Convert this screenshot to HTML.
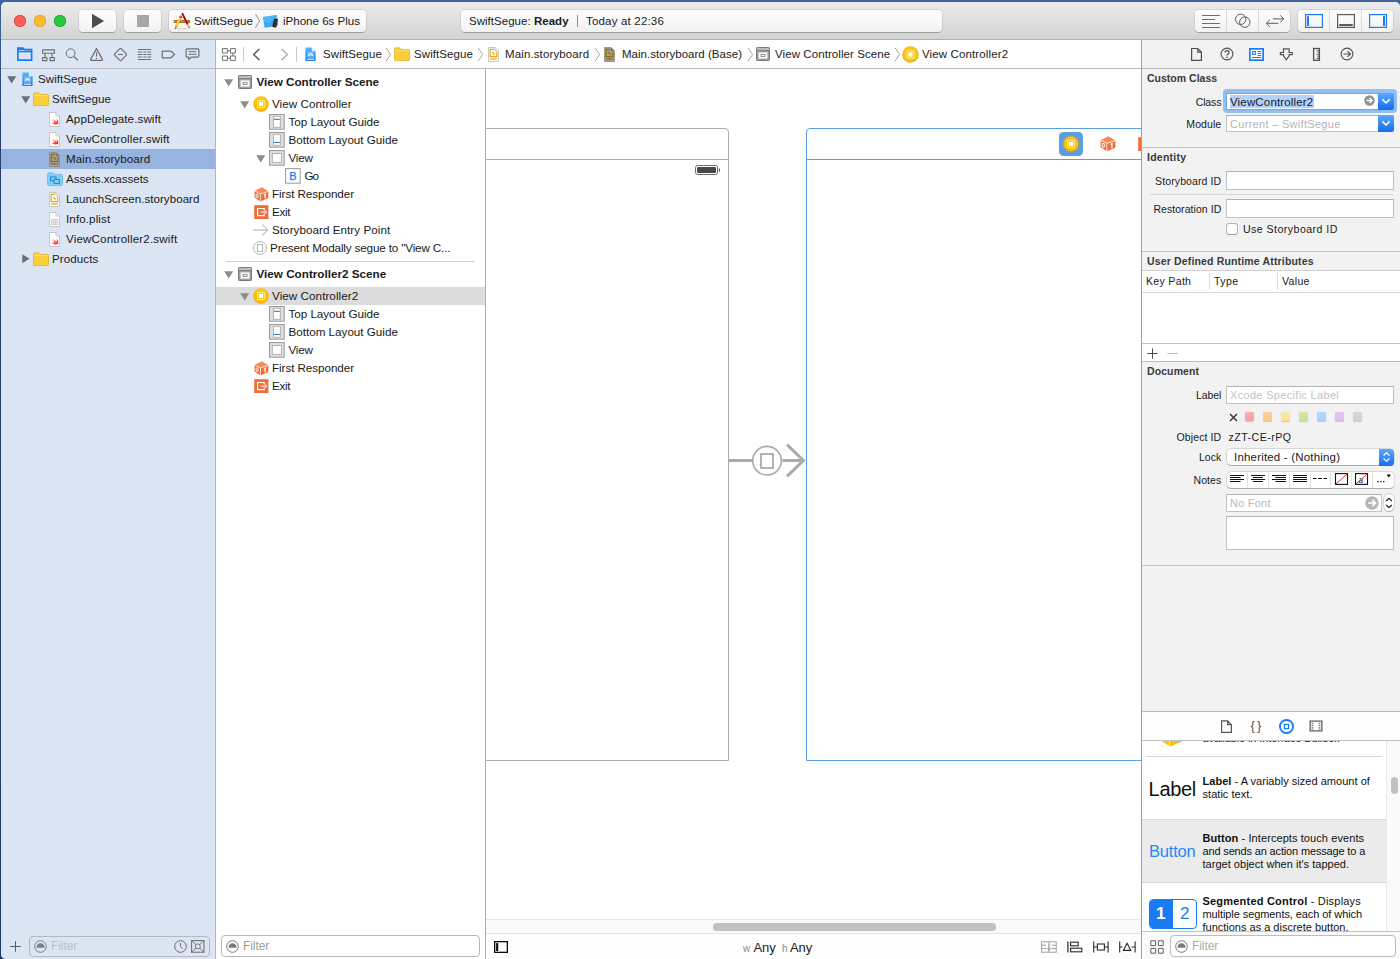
<!DOCTYPE html>
<html><head><meta charset="utf-8">
<style>
*{box-sizing:border-box;margin:0;padding:0}
html,body{width:1400px;height:959px;overflow:hidden;background:linear-gradient(#45699d 0,#3b5f93 3px,#3b5f93 30px,#24426f 120px,#203b66 959px);font-family:"Liberation Sans",sans-serif;font-size:12px;color:#1a1a1a}
#win{position:absolute;left:0;top:0;width:1400px;height:959px;overflow:hidden}
#win div,#win svg,#win span{position:absolute}
#wbg{left:1px;top:2px;width:1399px;height:957px;background:#fff;border-radius:5px 5px 0 5px}
#tb{left:1px;top:2px;width:1399px;height:38px;background:linear-gradient(#ececec,#d3d3d3);border-bottom:1px solid #b1b1b1;border-radius:5px 5px 0 0}
.tl{top:15px;width:12px;height:12px;border-radius:6px}
.btn{top:10px;height:22px;background:linear-gradient(#fefefe,#f2f2f2);border-radius:4px;box-shadow:0 0 0 .5px rgba(0,0,0,.15),0 1px 0 rgba(0,0,0,.2)}
.t{white-space:nowrap;line-height:14px}
.b{font-weight:bold}
#nav{left:1px;top:40px;width:214px;height:919px;background:#dbe5f4;border-radius:0 0 0 5px}
.hl{height:1px;background:#c6c6c6}
.vl{width:1px;background:#c6c6c6}
#insp{left:1142px;top:40px;width:258px;height:919px;background:#f2f2f2}

.tri{width:0;height:0;border-left:4.5px solid transparent;border-right:4.5px solid transparent;border-top:7px solid #6d6d6d}
.trir{width:0;height:0;border-top:4.5px solid transparent;border-bottom:4.5px solid transparent;border-left:7px solid #6d6d6d}

.fld{background:#fff;border:1px solid #c1c1c1;border-top-color:#b2b2b2}
.lab{white-space:nowrap;line-height:14px;font-size:10.5px;text-align:right;width:80px;left:1141.3px}
.sec{white-space:nowrap;line-height:14px;font-size:10.5px;font-weight:bold;left:1147px;color:#3a3a3a}
.s11{font-size:10.6px}
.o{font-size:11.7px}
.n{font-size:11.6px}
.j{font-size:11.5px}
.d{font-size:11px;line-height:14px;color:#111}
</style></head><body>
<div id="win">
<div id="wbg"></div>
<div id="tb"></div>
<div id="nav"></div><div class="vl" style="left:215px;top:40px;height:919px;background:#b5b5b5"></div>
<div id="insp"></div><div class="vl" style="left:1141px;top:40px;height:919px;background:#9f9f9f"></div>
<!--TOOLBAR-->
<div class="tl" style="left:14px;background:#fc5f57;box-shadow:inset 0 0 0 .6px #d8392f"></div>
<div class="tl" style="left:34px;background:#fdbc2e;box-shadow:inset 0 0 0 .6px #d8981a"></div>
<div class="tl" style="left:54px;background:#28c840;box-shadow:inset 0 0 0 .6px #179f27"></div>
<div class="btn" style="left:79px;width:37px"></div>
<svg style="left:91px;top:13px" width="14" height="16" viewBox="0 0 14 16"><path d="M1 .8 L13 8 L1 15.2Z" fill="#4d4d4d"/></svg>
<div class="btn" style="left:124px;width:37px"></div>
<div style="left:137px;top:15px;width:12px;height:12px;background:#a6a6a6"></div>
<div class="btn" style="left:169px;width:197px"></div>
<svg style="left:173px;top:12px" width="19" height="18" viewBox="0 0 19 18">
<ellipse cx="9" cy="16.6" rx="7" ry=".7" fill="#000" opacity=".12"/>
<rect x=".8" y="8" width="16.2" height="3" fill="#a97430"/><path d="M1.8 9.5H16" stroke="#cfa76a" stroke-width=".8" stroke-dasharray="1.2 .8"/>
<path d="M9.5 1.8 L14.8 12.6" stroke="#a30b0b" stroke-width="1.9" stroke-linecap="round"/>
<path d="M14.6 12.4 L15.5 14.2" stroke="#f3d4d4" stroke-width="2.2"/>
<path d="M14.6 14.5 L16.5 13.7 L16.9 16.9Z" fill="#b06c35"/>
<path d="M7.6 5.4 L3.4 14.2" stroke="#d9b90f" stroke-width="2.3"/>
<path d="M7.3 5.2 L3.1 14" stroke="#fbea2a" stroke-width="1.4"/>
<circle cx="7.7" cy="4.9" r="1.45" fill="#f1346a"/>
<path d="M2.2 13.6 L4.6 14.8 L2.2 16.8Z" fill="#c98b4e"/><circle cx="2.3" cy="16.5" r=".6" fill="#222"/>
</svg>
<span class="t" style="letter-spacing:0.034px;left:194px;top:14px;font-size:11.6px">SwiftSegue</span>
<svg style="left:255px;top:13px" width="6" height="16" viewBox="0 0 6 16"><path d="M.5 1.1 L4.6 7.9 L.5 14.7" stroke="#8e8e8e" stroke-width="1" fill="none"/></svg>
<svg style="left:262px;top:13px" width="18" height="16" viewBox="0 0 18 16">
<path d="M1 4.1 L14.9 2.1 L16 12.4 L2.7 14.9Z" fill="#3ba3f3"/><path d="M1 4.1 L14.9 2.1 L15.4 7 L1.6 9.4Z" fill="#58b6f8" opacity=".7"/>
<path d="M6 5.5L7.2 4.2M5.4 9.2H8M5.6 12L6.2 10.8" stroke="#9ad4fb" stroke-width=".6"/>
<path d="M12.2 5.6 L15.9 6.3 L14.1 14.7 L10.4 13.7Z" fill="#161616"/><path d="M13.1 6.8 L15 7.2 L13.6 13.4 L11.7 12.9Z" fill="#3a3a3a"/>
</svg>
<span class="t" style="letter-spacing:-0.025px;left:283px;top:14px;font-size:11.6px">iPhone 6s Plus</span>
<div class="btn" style="left:461px;width:481px"></div>
<span class="t" style="letter-spacing:0.029px;left:469px;top:14px;font-size:11.5px">SwiftSegue: <b>Ready</b></span>
<div class="vl" style="left:577px;top:15px;height:12px;background:#8b8b8b"></div>
<span class="t" style="letter-spacing:0.182px;left:586px;top:14px;font-size:11.5px">Today at 22:36</span>
<div class="btn" style="left:1195px;width:95px"></div>
<div class="vl" style="left:1226px;top:10px;height:22px;background:#dcdcdc"></div>
<div class="vl" style="left:1258px;top:10px;height:22px;background:#dcdcdc"></div>
<svg style="left:1201px;top:14px" width="20" height="15" viewBox="0 0 20 15"><path d="M1 1.5h18M1 5.5h13M1 9.5h18M1 13.5h18" stroke="#1a7bf5" stroke-width="1.2"/></svg>
<svg style="left:1233px;top:12px" width="20" height="18" viewBox="0 0 20 18"><circle cx="7.7" cy="7.3" r="5.2" fill="none" stroke="#5a5a5a" stroke-width="1"/><circle cx="11.8" cy="10.2" r="5.2" fill="none" stroke="#5a5a5a" stroke-width="1"/></svg>
<svg style="left:1264px;top:13px" width="22" height="16" viewBox="0 0 22 16"><path d="M8.8 5.9H19.6M16.2 2.4L19.8 5.9L16.2 9.4M14.3 10.3H2.4M5.8 6.8L2.2 10.3L5.8 13.8" stroke="#5a5a5a" stroke-width="1" fill="none"/></svg>
<div class="btn" style="left:1298px;width:95px"></div>
<div class="vl" style="left:1329px;top:10px;height:22px;background:#dcdcdc"></div>
<div class="vl" style="left:1361px;top:10px;height:22px;background:#dcdcdc"></div>
<svg style="left:1305px;top:14px" width="18" height="14" viewBox="0 0 18 14"><rect x=".6" y=".6" width="16.8" height="12.8" fill="none" stroke="#1a7bf5" stroke-width="1.2"/><rect x="2" y="2.1" width="2" height="9.8" rx=".4" fill="#1a7bf5"/></svg>
<svg style="left:1337px;top:14px" width="18" height="14" viewBox="0 0 18 14"><rect x=".6" y=".6" width="16.8" height="12.8" fill="none" stroke="#5a5a5a" stroke-width="1.2"/><rect x="2.1" y="10" width="13.8" height="2" rx=".4" fill="#5a5a5a"/></svg>
<svg style="left:1369px;top:14px" width="18" height="14" viewBox="0 0 18 14"><rect x=".6" y=".6" width="16.8" height="12.8" fill="none" stroke="#1a7bf5" stroke-width="1.2"/><rect x="14" y="2.1" width="2" height="9.8" rx=".4" fill="#1a7bf5"/></svg>
<!--NAVIGATOR-->
<svg width="0" height="0" style="left:0;top:0"><defs>
<linearGradient id="pg" x1="0" y1="0" x2="0" y2="1"><stop offset="0" stop-color="#5bb6fa"/><stop offset="1" stop-color="#1a7ef4"/></linearGradient>
<radialGradient id="vcg" cx=".5" cy=".45" r=".55"><stop offset="0" stop-color="#ffd40a"/><stop offset=".7" stop-color="#fcc40d"/><stop offset="1" stop-color="#eda60a"/></radialGradient>
<g id="fold"><path d="M.5 2.2 Q.5 .8 1.8 .8 H5.6 L7 2.4 H14.4 Q15.5 2.4 15.5 3.6 V12.6 Q15.5 13.6 14.4 13.6 H1.6 Q.5 13.6 .5 12.6Z" fill="#fccf3a" stroke="#e0ae14" stroke-width=".7"/><path d="M1 3.4H15" stroke="#fde07a" stroke-width=".8"/></g>
<g id="doc"><path d="M.5 .5 H7 L10.5 4 V14.5 H.5Z" fill="#fff" stroke="#b9b9b9" stroke-width=".8"/><path d="M7 .5 V4 H10.5" fill="#eee" stroke="#b9b9b9" stroke-width=".7"/></g>
<g id="swift"><use href="#doc"/><path d="M2.4 7.4 Q5 9.8 7 10.6 Q5 8.4 3.8 6.4 Q6.2 8.8 8 9.8 Q8.4 8.2 7.2 6 Q9.8 8.6 9 11 Q9.6 12 9.4 12.8 Q8.6 11.8 7.6 12.2 Q5.2 13.2 2.4 10.4 Q4.2 11.2 5.6 10.4 Q3.6 9 2.4 7.4Z" fill="#f0412a"/></g>
<g id="sbY"><path d="M.5 .5 H7 L10.5 4 V14.5 H.5Z" fill="#fff" stroke="#b9b9b9" stroke-width=".8"/><path d="M7 .5 V4 H10.5" fill="#eee" stroke="#b9b9b9" stroke-width=".7"/><path d="M6.2 2.3 H2.2 V9.6 H8.8 V5" fill="none" stroke="#e3a61a" stroke-width="1.2"/><path d="M2.2 12H8.8" stroke="#e3a61a" stroke-width="1.3"/><path d="M3.8 4.4 Q6.6 5 7 8.2 Q4.6 7.6 3.8 4.4Z" fill="#e3a61a"/></g>
<g id="sbB"><path d="M.5 .5 H7 L10.5 4 V14.5 H.5Z" fill="#a39e94" stroke="#8e897f" stroke-width=".8"/><path d="M7 .5 V4 H10.5Z" fill="#77736b"/><path d="M6.2 2.3 H2.2 V9.6 H8.8 V5" fill="none" stroke="#946c14" stroke-width="1.2"/><path d="M2.2 12H8.8" stroke="#946c14" stroke-width="1.3"/><path d="M3.8 4.4 Q6.6 5 7 8.2 Q4.6 7.6 3.8 4.4Z" fill="#946c14"/></g>
<g id="proj"><path d="M.4 .4 H6.8 L10.6 4.2 V14 H.4Z" fill="url(#pg)"/><path d="M6.8 .4 V4.2 H10.6Z" fill="#eaf4ff"/><rect x="2" y="4.6" width="7" height="6.2" fill="#fff" opacity=".28"/><path d="M3.6 9 Q3.8 6.4 5.5 6.4 Q7.2 6.4 7.4 9 M4.4 8.2 L5.5 7.4 L6.6 8.2" stroke="#fff" fill="none" stroke-width="1"/><path d="M2 12.2H9" stroke="#fff" stroke-width="1"/></g>
<g id="plist"><use href="#doc"/><path d="M2.4 7.5 H8.6 V12.5 H2.4Z M2.4 10 H8.6 M4.5 7.5 V12.5 M6.6 7.5V12.5" fill="#f4f4f4" stroke="#bdbdbd" stroke-width=".7"/></g>
<g id="xca"><path d="M.5 2.2 Q.5 .8 1.8 .8 H5.6 L7 2.4 H14.4 Q15.5 2.4 15.5 3.6 V12.6 Q15.5 13.6 14.4 13.6 H1.6 Q.5 13.6 .5 12.6Z" fill="#7fd0f5" stroke="#4db0e4" stroke-width=".6"/><rect x="3.5" y="5" width="5.5" height="4" fill="none" stroke="#1b7fd6" stroke-width=".9"/><rect x="7" y="7.4" width="5.5" height="4" fill="#7fd0f5" stroke="#1b7fd6" stroke-width=".9"/></g>
<g id="scene"><rect x=".5" y=".5" width="13" height="13" rx=".8" fill="#9f9f9f" stroke="#787878" stroke-width="1"/><path d="M1.2 2.6 L2.6 1.4 L4 2.6 L5.4 1.4 L6.8 2.6 L8.2 1.4 L9.6 2.6 L11 1.4 L12.6 2.6" fill="none" stroke="#e8e8e8" stroke-width=".9"/><path d="M.5 3.6H13.5" stroke="#787878" stroke-width=".8"/><rect x="2.2" y="5" width="9.6" height="7" fill="#cfcfcf"/><rect x="3" y="5.9" width="8" height="5.2" fill="#fff"/><rect x="5" y="7.5" width="4" height="2" fill="none" stroke="#8a8a8a" stroke-width=".9"/></g>
<g id="vc"><circle cx="8" cy="8" r="7.8" fill="url(#vcg)"/><rect x="4.5" y="4.5" width="7" height="7" fill="none" stroke="#ffe47a" stroke-width="1"/><rect x="6" y="6" width="4" height="4" fill="#fff"/></g>
<g id="lgT"><rect x=".5" y=".5" width="14.7" height="14.7" fill="#dedede" stroke="#9a9a9a" stroke-width="1"/><rect x="4.4" y="2.3" width="6.9" height="11" fill="#fff" stroke="#a6a6a6" stroke-width=".8"/><path d="M4.8 5.3H10.9" stroke="#2a6fc4" stroke-width="1"/></g>
<g id="lgB"><rect x=".5" y=".5" width="14.7" height="14.7" fill="#dedede" stroke="#9a9a9a" stroke-width="1"/><rect x="4.4" y="2.3" width="6.9" height="11" fill="#fff" stroke="#a6a6a6" stroke-width=".8"/><path d="M4.8 10.4H10.9" stroke="#2a6fc4" stroke-width="1"/></g>
<g id="vw"><rect x=".5" y=".5" width="14.7" height="14.7" fill="#dedede" stroke="#9a9a9a" stroke-width="1"/><rect x="3.3" y="3.5" width="9.1" height="8.8" fill="#fff" stroke="#a6a6a6" stroke-width=".8"/></g>
<g id="bt"><rect x=".6" y=".6" width="14.6" height="14.6" fill="#fff" stroke="#9a9a9a" stroke-width="1"/><text x="4.2" y="12" font-family="Liberation Sans,sans-serif" font-size="11" fill="#1a7bf5" stroke="#1a7bf5" stroke-width=".25">B</text></g>
<g id="fr"><path d="M7.9 .5 L14.4 4.4 V11 L6.4 14.4 L.6 10.6 V3.9Z" fill="#f26b38"/><path d="M7.9 .5 L14.4 4.4 L6.4 6.9 L.6 3.9Z" fill="#f58a5a"/><path d="M.6 3.9 L6.4 6.9 L14.4 4.4 M6.4 6.9V14.4" stroke="#fff" stroke-width=".8" fill="none"/><ellipse cx="3.1" cy="8.7" rx="1.05" ry="1.9" fill="none" stroke="#fff" stroke-width=".9" transform="rotate(-8 3.1 8.7)"/><path d="M9.9 8.2 L11.2 7.2 V11.4" stroke="#fff" stroke-width="1.2" fill="none"/></g>
<g id="ex"><rect x=".2" y=".2" width="14.2" height="13.8" fill="#f26b38"/><path d="M10.2 5.4 V3.5 H3.6 V10.6 H10.2 V8.8" fill="none" stroke="#fff" stroke-width="1.2"/><path d="M6.6 7.1 H12.6 M10.8 5.5 L12.7 7.1 L10.8 8.7" fill="none" stroke="#fff" stroke-width="1"/></g>
<g id="sg"><circle cx="7" cy="7" r="6.4" fill="#fff" stroke="#a9a9a9" stroke-width=".9"/><rect x="4.4" y="3.6" width="5.2" height="6.8" fill="none" stroke="#a9a9a9" stroke-width=".9"/></g>
</defs></svg>
<div class="hl" style="left:1px;top:68px;width:214px;background:#b9bcc2"></div>
<div style="left:1px;top:149px;width:214px;height:20px;background:#97b3df"></div>
<span class="t n" style="letter-spacing:0.034px;left:38px;top:72.1px">SwiftSegue</span>
<span class="t n" style="letter-spacing:0.034px;left:52px;top:92.1px">SwiftSegue</span>
<span class="t n" style="letter-spacing:0.103px;left:66px;top:112.1px">AppDelegate.swift</span>
<span class="t n" style="letter-spacing:0.137px;left:66px;top:132.1px">ViewController.swift</span>
<span class="t n" style="letter-spacing:0.077px;left:66px;top:152.1px">Main.storyboard</span>
<span class="t n" style="letter-spacing:-0.035px;left:66px;top:172.1px">Assets.xcassets</span>
<span class="t n" style="letter-spacing:0.031px;left:66px;top:192.1px">LaunchScreen.storyboard</span>
<span class="t n" style="letter-spacing:0.111px;left:66px;top:212.1px">Info.plist</span>
<span class="t n" style="letter-spacing:0.155px;left:66px;top:232.1px">ViewController2.swift</span>
<span class="t n" style="letter-spacing:0.067px;left:52px;top:252.1px">Products</span>
<svg style="left:6.8px;top:75.7px" width="10" height="8" viewBox="0 0 10 8"><path d="M.2 .3 H9.2 L4.7 7.6Z" fill="#6b7077"/></svg><svg style="left:20.8px;top:95.7px" width="10" height="8" viewBox="0 0 10 8"><path d="M.2 .3 H9.2 L4.7 7.6Z" fill="#6b7077"/></svg><svg style="left:22px;top:254.3px" width="8" height="10" viewBox="0 0 8 10"><path d="M.3 .2 V9.2 L7.6 4.7Z" fill="#6b7077"/></svg>
<svg style="left:21.5px;top:72px" width="12" height="15"><use href="#proj"/></svg>
<svg style="left:33px;top:92px" width="16" height="15"><use href="#fold"/></svg>
<svg style="left:49.2px;top:111.5px" width="12" height="16"><use href="#swift"/></svg>
<svg style="left:49.2px;top:131.5px" width="12" height="16"><use href="#swift"/></svg>
<svg style="left:49.2px;top:151.5px" width="12" height="16"><use href="#sbB"/></svg>
<svg style="left:47px;top:171.5px" width="16" height="15"><use href="#xca"/></svg>
<svg style="left:49.2px;top:191.5px" width="12" height="16"><use href="#sbY"/></svg>
<svg style="left:49.2px;top:211.5px" width="12" height="16"><use href="#plist"/></svg>
<svg style="left:49.2px;top:231.5px" width="12" height="16"><use href="#swift"/></svg>
<svg style="left:33px;top:252px" width="16" height="15"><use href="#fold"/></svg>
<!--JUMPBAR-->
<svg style="left:17px;top:47px" width="16" height="15" viewBox="0 0 16 15"><path d="M.9 1.2 H6 L7.2 2.6 H14.6 V13.1 H.9Z" fill="none" stroke="#1a7bf5" stroke-width="1.7"/><path d="M.9 4.6H14.6" stroke="#1a7bf5" stroke-width="1.5"/><path d="M.1 1.4 H5.8 L7.2 3 H.1Z" fill="#1a7bf5"/></svg>
<svg style="left:41px;top:48px" width="15" height="14" viewBox="0 0 15 14"><path d="M1.6 1.9 H13.4 V5.3 H1.6Z M4 5.3 V9.6 M11 5.3 V9.6 M1.6 9.6 H5.9 V12.6 H1.6Z M9.1 9.6 H13.4 V12.6 H9.1Z" fill="none" stroke="#6f6f6f" stroke-width="1.1"/></svg>
<svg style="left:65px;top:48px" width="14" height="13" viewBox="0 0 14 13"><circle cx="5.6" cy="5.2" r="4.4" fill="none" stroke="#6f6f6f" stroke-width="1"/><path d="M8.8 8.4 L13 12.2" stroke="#6f6f6f" stroke-width="1.3"/></svg>
<svg style="left:89px;top:47px" width="15" height="15" viewBox="0 0 15 15"><path d="M7.5 1.6 L13.4 12.4 Q13.6 13.3 12.6 13.4 H2.4 Q1.4 13.3 1.6 12.4Z" fill="none" stroke="#6f6f6f" stroke-width="1.2" stroke-linejoin="round"/><path d="M7.5 5.2V9.6M7.5 10.8V12" stroke="#6f6f6f" stroke-width="1.1"/></svg>
<svg style="left:113px;top:47px" width="15" height="15" viewBox="0 0 15 15"><path d="M6.6 1.9 Q7.5 1 8.4 1.9 L13.1 6.6 Q14 7.5 13.1 8.4 L8.4 13.1 Q7.5 14 6.6 13.1 L1.9 8.4 Q1 7.5 1.9 6.6Z" fill="none" stroke="#6f6f6f" stroke-width="1.2" stroke-linejoin="round"/><path d="M5 7.5H10" stroke="#6f6f6f" stroke-width="1.1"/></svg>
<svg style="left:137px;top:48px" width="15" height="13" viewBox="0 0 15 13"><path d="M.8 1.5H14.2M.8 11.5H14.2" stroke="#6f6f6f" stroke-width="1"/><path d="M.8 4H5.4M6.4 4H9.4M10.4 4H14.2M.8 6.5H5.4M6.4 6.5H9.4M10.4 6.5H14.2M.8 9H5.4M6.4 9H9.4M10.4 9H14.2" stroke="#6f6f6f" stroke-width="1"/></svg>
<svg style="left:161px;top:50px" width="15" height="9" viewBox="0 0 15 9"><path d="M1.2 1.2 H10 L13.6 4.5 L10 7.8 H1.2Z" fill="none" stroke="#6f6f6f" stroke-width="1.2" stroke-linejoin="round"/></svg>
<svg style="left:185px;top:48px" width="15" height="13" viewBox="0 0 15 13"><path d="M2.2 .9 H12.8 Q13.9 .9 13.9 2 V8 Q13.9 9.1 12.8 9.1 H6.4 L3.8 11.6 V9.1 H2.2 Q1.1 9.1 1.1 8 V2 Q1.1 .9 2.2 .9Z" fill="none" stroke="#6f6f6f" stroke-width="1.2" stroke-linejoin="round"/><path d="M3.6 3.7H11.4M3.6 6.3H11.4" stroke="#6f6f6f" stroke-width="1"/></svg>
<div class="hl" style="left:216px;top:68px;width:926px;background:#b9b9b9"></div>
<svg style="left:221px;top:47px" width="16" height="15" viewBox="0 0 16 15"><path d="M1.4 1.6 H6.4 V6 H1.4Z M9.4 1.6 H14.4 V6 H9.4Z M1.4 9 H6.4 V13.4 H1.4Z M9.4 9 H14.4 V13.4 H9.4Z M6.4 3.8 H9.4 M11.9 6 V9 M6.4 11.2 H9.4" fill="none" stroke="#6f6f6f" stroke-width="1"/></svg>
<div class="vl" style="left:243px;top:47px;height:15px;background:#c9c9c9"></div>
<svg style="left:252px;top:48px" width="9" height="13" viewBox="0 0 9 13"><path d="M7.4 1 L1.6 6.5 L7.4 12" fill="none" stroke="#4a4a4a" stroke-width="1.3"/></svg>
<svg style="left:280px;top:48px" width="9" height="13" viewBox="0 0 9 13"><path d="M1.6 1 L7.4 6.5 L1.6 12" fill="none" stroke="#a8a8a8" stroke-width="1.3"/></svg>
<div class="vl" style="left:296px;top:47px;height:15px;background:#c9c9c9"></div>
<svg style="left:305px;top:46.5px" width="12" height="15"><use href="#proj"/></svg>
<span class="t j" style="letter-spacing:0.081px;left:323px;top:47px">SwiftSegue</span>
<svg class="sep" style="left:385px;top:47px" width="7" height="15" viewBox="0 0 7 15"><path d="M1 .8 L5.6 7.5 L1 14.2" fill="none" stroke="#a3a3a3" stroke-width="1"/></svg>
<svg style="left:394px;top:47px" width="16" height="15"><use href="#fold"/></svg>
<span class="t j" style="letter-spacing:0.081px;left:414px;top:47px">SwiftSegue</span>
<svg class="sep" style="left:477px;top:47px" width="7" height="15" viewBox="0 0 7 15"><path d="M1 .8 L5.6 7.5 L1 14.2" fill="none" stroke="#a3a3a3" stroke-width="1"/></svg>
<svg style="left:487.5px;top:46.5px" width="12" height="16"><use href="#sbY"/></svg>
<span class="t j" style="letter-spacing:0.122px;left:505px;top:47px">Main.storyboard</span>
<svg class="sep" style="left:594px;top:47px" width="7" height="15" viewBox="0 0 7 15"><path d="M1 .8 L5.6 7.5 L1 14.2" fill="none" stroke="#a3a3a3" stroke-width="1"/></svg>
<svg style="left:604px;top:46.5px" width="12" height="16"><use href="#sbB"/></svg>
<span class="t j" style="letter-spacing:0.021px;left:622px;top:47px">Main.storyboard (Base)</span>
<svg class="sep" style="left:746.5px;top:47px" width="7" height="15" viewBox="0 0 7 15"><path d="M1 .8 L5.6 7.5 L1 14.2" fill="none" stroke="#a3a3a3" stroke-width="1"/></svg>
<svg style="left:756px;top:47px" width="14" height="14"><use href="#scene"/></svg>
<span class="t j" style="letter-spacing:0.077px;left:775px;top:47px">View Controller Scene</span>
<svg class="sep" style="left:894px;top:47px" width="7" height="15" viewBox="0 0 7 15"><path d="M1 .8 L5.6 7.5 L1 14.2" fill="none" stroke="#a3a3a3" stroke-width="1"/></svg>
<svg style="left:902px;top:46px" width="17" height="17" viewBox="0 0 16 16"><use href="#vc"/></svg>
<span class="t j" style="letter-spacing:0.127px;left:922px;top:47px">View Controller2</span>
<!--OUTLINE-->
<div class="vl" style="left:485px;top:69px;height:890px;background:#adadad"></div>
<div style="left:216px;top:287px;width:269px;height:18px;background:#dcdcdc"></div>
<div class="hl" style="left:226px;top:261px;width:249px;background:#d0d0d0"></div>
<svg style="left:223.8px;top:78.7px" width="10" height="8" viewBox="0 0 10 8"><path d="M.2 .3 H9.2 L4.7 7.6Z" fill="#8c8c8c"/></svg><svg style="left:238px;top:75px" width="14" height="14"><use href="#scene"/></svg>
<span class="t b o" style="letter-spacing:-0.029px;left:256.5px;top:75px">View Controller Scene</span>
<svg style="left:239.8px;top:100.7px" width="10" height="8" viewBox="0 0 10 8"><path d="M.2 .3 H9.2 L4.7 7.6Z" fill="#8c8c8c"/></svg><svg style="left:253px;top:96px" width="16" height="16"><use href="#vc"/></svg>
<span class="t o" style="letter-spacing:0.037px;left:272px;top:97px">View Controller</span>
<svg style="left:269px;top:114px" width="16" height="16"><use href="#lgT"/></svg>
<span class="t o" style="letter-spacing:-0.045px;left:288.5px;top:115px">Top Layout Guide</span>
<svg style="left:269px;top:132px" width="16" height="16"><use href="#lgB"/></svg>
<span class="t o" style="letter-spacing:-0.022px;left:288.5px;top:133px">Bottom Layout Guide</span>
<svg style="left:255.8px;top:154.7px" width="10" height="8" viewBox="0 0 10 8"><path d="M.2 .3 H9.2 L4.7 7.6Z" fill="#8c8c8c"/></svg><svg style="left:269px;top:150px" width="16" height="16"><use href="#vw"/></svg>
<span class="t o" style="letter-spacing:-0.231px;left:288.5px;top:151px">View</span>
<svg style="left:285px;top:168px" width="16" height="16"><use href="#bt"/></svg>
<span class="t o" style="letter-spacing:-0.997px;left:304.5px;top:169px">Go</span>
<svg style="left:254px;top:186.9px" width="15" height="15"><use href="#fr"/></svg>
<span class="t o" style="letter-spacing:-0.077px;left:272px;top:187px">First Responder</span>
<svg style="left:253.8px;top:204.9px" width="15" height="15"><use href="#ex"/></svg>
<span class="t o" style="letter-spacing:-0.321px;left:272px;top:205px">Exit</span>
<svg style="left:253px;top:223px" width="16" height="14" viewBox="0 0 16 14"><path d="M.5 7H14.6M9 1.4L14.8 7L9 12.6" fill="none" stroke="#a9a9a9" stroke-width="1"/></svg>
<span class="t o" style="letter-spacing:0.028px;left:272px;top:223px">Storyboard Entry Point</span>
<svg style="left:253px;top:241px" width="14" height="14"><use href="#sg"/></svg>
<span class="t o" style="letter-spacing:-0.156px;left:270px;top:241px">Present Modally segue to "View C...</span>
<svg style="left:223.8px;top:270.7px" width="10" height="8" viewBox="0 0 10 8"><path d="M.2 .3 H9.2 L4.7 7.6Z" fill="#8c8c8c"/></svg><svg style="left:238px;top:267px" width="14" height="14"><use href="#scene"/></svg>
<span class="t b o" style="letter-spacing:-0.000px;left:256.5px;top:267px">View Controller2 Scene</span>
<svg style="left:239.8px;top:292.7px" width="10" height="8" viewBox="0 0 10 8"><path d="M.2 .3 H9.2 L4.7 7.6Z" fill="#8c8c8c"/></svg><svg style="left:253px;top:288px" width="16" height="16"><use href="#vc"/></svg>
<span class="t o" style="letter-spacing:0.041px;left:272px;top:289px">View Controller2</span>
<svg style="left:269px;top:306px" width="16" height="16"><use href="#lgT"/></svg>
<span class="t o" style="letter-spacing:-0.045px;left:288.5px;top:307px">Top Layout Guide</span>
<svg style="left:269px;top:324px" width="16" height="16"><use href="#lgB"/></svg>
<span class="t o" style="letter-spacing:-0.022px;left:288.5px;top:325px">Bottom Layout Guide</span>
<svg style="left:269px;top:342px" width="16" height="16"><use href="#vw"/></svg>
<span class="t o" style="letter-spacing:-0.231px;left:288.5px;top:343px">View</span>
<svg style="left:254px;top:360.9px" width="15" height="15"><use href="#fr"/></svg>
<span class="t o" style="letter-spacing:-0.077px;left:272px;top:361px">First Responder</span>
<svg style="left:253.8px;top:378.9px" width="15" height="15"><use href="#ex"/></svg>
<span class="t o" style="letter-spacing:-0.321px;left:272px;top:379px">Exit</span>
<!--CANVAS-->
<div style="left:486px;top:69px;width:655px;height:864px;overflow:hidden">
 <div style="left:-200px;top:59px;width:443px;height:633px;border:1px solid #ababab;border-radius:4px 4px 0 0"></div>
 <div class="hl" style="left:0;top:90px;width:242px;background:#ababab"></div>
 <svg style="left:208px;top:95px" width="28" height="12" viewBox="0 0 28 12"><rect x="1.5" y="1.5" width="22" height="9" rx="2" fill="#fff" stroke="#6a6a6a" stroke-width="1"/><rect x="3" y="3" width="19" height="6" rx="1" fill="#4a4a4a"/><path d="M24.9 3.9 Q26.1 4.2 26.1 6 Q26.1 7.8 24.9 8.1Z" fill="#5a5a5a"/></svg>
 <div style="left:320px;top:59px;width:600px;height:633px;border:1px solid #5a9ee2;border-radius:4px 4px 0 0"></div>
 <div class="hl" style="left:320px;top:90px;width:400px;background:#5a9ee2"></div>
 <div style="left:573px;top:63px;width:24px;height:24px;border-radius:4.5px;background:#5d9fde"></div>
 <svg style="left:577px;top:67px" width="16" height="16"><use href="#vc"/></svg>
 <svg style="left:614.3px;top:66.8px" width="16" height="16" viewBox="0 0 15 15"><use href="#fr"/></svg>
 <svg style="left:652px;top:68px" width="15" height="15"><use href="#ex"/></svg>
 <svg style="left:242px;top:370px" width="80" height="44" viewBox="0 0 80 44"><path d="M1 21.5H24.5M54.5 21.5H75" stroke="#ababab" stroke-width="3" fill="none"/><circle cx="39" cy="21.7" r="14.3" fill="#fff" stroke="#ababab" stroke-width="1.6"/><rect x="33" y="15" width="12" height="14" fill="none" stroke="#ababab" stroke-width="1.8"/><path d="M59 5.6 L75.4 21.5 L59 37.4" fill="none" stroke="#ababab" stroke-width="3"/></svg>
 <div class="hl" style="left:0;top:850px;width:655px;background:#e8e8e8"></div>
 <div style="left:0;top:851px;width:655px;height:13px;background:#fafafa"></div>
 <div style="left:227px;top:854.3px;width:283px;height:7.4px;border-radius:3.7px;background:#c1c1c1"></div>
</div>
<!--INSPECTOR-->
<div class="hl" style="left:1142px;top:68px;width:258px;background:#b9b9b9"></div>
<svg style="left:1190px;top:47px" width="13" height="15" viewBox="0 0 13 15"><path d="M1.6 1.5 H7.8 L11.4 5.1 V13.3 H1.6Z M7.8 1.5 V5.1 H11.4" fill="none" stroke="#505050" stroke-width="1.2"/></svg>
<svg style="left:1219.5px;top:47.4px" width="14" height="14" viewBox="0 0 14 14"><circle cx="7" cy="7" r="5.9" fill="none" stroke="#505050" stroke-width="1.1"/><path d="M5 5.6 Q5 3.6 7 3.6 Q9 3.6 9 5.4 Q9 6.5 7.8 7.1 Q7 7.6 7 8.6" fill="none" stroke="#505050" stroke-width="1.2"/><rect x="6.35" y="9.6" width="1.3" height="1.4" fill="#505050"/></svg>
<svg style="left:1249px;top:48px" width="15" height="13" viewBox="0 0 15 13"><rect width="15" height="13" fill="#1a7bf5"/><rect x="1.7" y="1.7" width="11.6" height="9.6" fill="#fff"/><rect x="3" y="3" width="4" height="4" fill="#1a7bf5"/><rect x="3.9" y="3.9" width="2.2" height="2.2" fill="#cfe2fd"/><path d="M8.6 3.5H12.2M8.6 5.5H12.2M8.6 7.5H12.2M2.9 9.5H12.2" stroke="#1a7bf5" stroke-width="1"/></svg>
<svg style="left:1279px;top:47px" width="15" height="15" viewBox="0 0 15 15"><path d="M4.5 1.8 H10.1 V5.5 H13.2 V7.6 H10.1 V8.8 L7.3 12.8 L4.5 8.8 V7.6 H1.4 V5.5 H4.5Z" fill="none" stroke="#505050" stroke-width="1.2" stroke-linejoin="miter"/></svg>
<svg style="left:1312px;top:47px" width="9" height="15" viewBox="0 0 9 15"><rect x="1.6" y="1.5" width="5.8" height="11.8" fill="none" stroke="#505050" stroke-width="1.3"/><path d="M4.6 3.8H7.2M5.4 5.8H7.2M4.6 7.8H7.2M5.4 9.8H7.2M4.6 11.4H7.2" stroke="#505050" stroke-width=".9"/></svg>
<svg style="left:1339.5px;top:47.4px" width="14" height="14" viewBox="0 0 14 14"><circle cx="7" cy="7" r="5.9" fill="none" stroke="#505050" stroke-width="1.1"/><path d="M3.4 7H10.4M7.6 4.2L10.4 7L7.6 9.8" fill="none" stroke="#505050" stroke-width="1.2"/></svg>

<span class="sec" style="letter-spacing:0.006px;top:71px">Custom Class</span>
<span class="t lab" style="letter-spacing:-0.133px;top:95px">Class</span>
<div style="left:1223px;top:89px;width:174px;height:23.5px;border-radius:4px;background:#92bff4"></div>
<div class="fld" style="left:1226px;top:93px;width:168px;height:17px;border-color:#6fa5ea"></div>
<div style="left:1229.8px;top:95px;width:84.6px;height:13px;background:#b2d2fb"></div>
<span class="t" style="letter-spacing:0.162px;left:1230px;top:94.5px;font-size:11.5px">ViewController2</span>
<svg style="left:1363.5px;top:95px" width="11" height="11" viewBox="0 0 11 11"><circle cx="5.5" cy="5.5" r="5.2" fill="#8f8f8f"/><path d="M2.4 5.5H8M5.6 3L8.2 5.5L5.6 8" fill="none" stroke="#fff" stroke-width="1.4"/></svg>
<div style="left:1378px;top:93px;width:16px;height:17px;border-radius:0 3px 3px 0;background:linear-gradient(#5aa9fb,#166cf2)"></div>
<svg style="left:1381px;top:98px" width="10" height="7" viewBox="0 0 10 7"><path d="M1.4 1.4L5 5L8.6 1.4" fill="none" stroke="#fff" stroke-width="1.5"/></svg>
<span class="t lab" style="letter-spacing:0.091px;top:117px">Module</span>
<div class="fld" style="left:1226px;top:115px;width:168px;height:17px"></div>
<span class="t" style="letter-spacing:0.302px;left:1230px;top:116.5px;font-size:11px;color:#b4b4b4">Current – SwiftSegue</span>
<div style="left:1378px;top:115px;width:16px;height:17px;border-radius:0 3px 3px 0;background:linear-gradient(#5aa9fb,#166cf2)"></div>
<svg style="left:1381px;top:120px" width="10" height="7" viewBox="0 0 10 7"><path d="M1.4 1.4L5 5L8.6 1.4" fill="none" stroke="#fff" stroke-width="1.5"/></svg>
<div class="hl" style="left:1142px;top:147px;width:258px;background:#c3c3c3"></div>

<span class="sec" style="letter-spacing:0.257px;top:150px">Identity</span>
<span class="t lab" style="letter-spacing:0.109px;top:174px">Storyboard ID</span>
<div class="fld" style="left:1226px;top:171px;width:168px;height:19px"></div>
<div class="hl" style="left:1150px;top:194px;width:243px;background:#d6d6d6"></div>
<span class="t lab" style="letter-spacing:0.055px;top:202px">Restoration ID</span>
<div class="fld" style="left:1226px;top:199px;width:168px;height:19px"></div>
<div style="left:1226px;top:223px;width:12px;height:12px;border:1px solid #b4b4b4;border-bottom-color:#a2a2a2;border-radius:3px;background:#fff"></div>
<span class="t s11" style="letter-spacing:0.451px;left:1243px;top:222px">Use Storyboard ID</span>
<div class="hl" style="left:1142px;top:251px;width:258px;background:#c3c3c3"></div>

<span class="sec" style="letter-spacing:0.158px;top:254px">User Defined Runtime Attributes</span>
<div style="left:1142px;top:270px;width:258px;height:92px;background:#fff;border-top:1px solid #cfcfcf;border-bottom:1px solid #bdbdbd"></div>
<span class="t s11" style="letter-spacing:0.287px;left:1146px;top:274px">Key Path</span>
<span class="t s11" style="letter-spacing:0.383px;left:1214px;top:274px">Type</span>
<span class="t s11" style="letter-spacing:0.298px;left:1282px;top:274px">Value</span>
<div class="vl" style="left:1209px;top:273px;height:17px;background:#dcdcdc"></div>
<div class="vl" style="left:1277px;top:273px;height:17px;background:#dcdcdc"></div>
<div class="hl" style="left:1142px;top:292px;width:258px;background:#d9d9d9"></div>
<div class="hl" style="left:1142px;top:343px;width:258px;background:#c3c3c3"></div>
<svg style="left:1147px;top:348px" width="11" height="11" viewBox="0 0 11 11"><path d="M5.5 .4V10.6M.4 5.5H10.6" stroke="#4a4a4a" stroke-width="1"/></svg>
<svg style="left:1167px;top:348px" width="11" height="11" viewBox="0 0 11 11"><path d="M.4 5.5H10.6" stroke="#b5b5b5" stroke-width="1"/></svg>

<span class="sec" style="letter-spacing:0.095px;top:364px">Document</span>
<span id="lablabel" class="t lab" style="letter-spacing:-0.101px;top:388px">Label</span>
<div class="fld" style="left:1226px;top:385.5px;width:168px;height:18px"></div>
<span class="t" style="letter-spacing:0.318px;left:1230px;top:388px;font-size:11px;color:#c3c3c3">Xcode Specific Label</span>
<svg style="left:1228.5px;top:413px" width="9" height="9" viewBox="0 0 9 9"><path d="M1 1L8 8M8 1L1 8" stroke="#3a3a3a" stroke-width="1.5"/></svg>
<div style="left:1245px;top:412px;width:8.6px;height:8.6px;border-radius:1.5px;background:linear-gradient(rgba(255,255,255,.18),rgba(255,255,255,0)),#f8a09c;box-shadow:0 .5px 1px rgba(0,0,0,.18)"></div>
<div style="left:1263px;top:412px;width:8.6px;height:8.6px;border-radius:1.5px;background:linear-gradient(rgba(255,255,255,.18),rgba(255,255,255,0)),#f9c88a;box-shadow:0 .5px 1px rgba(0,0,0,.18)"></div>
<div style="left:1281px;top:412px;width:8.6px;height:8.6px;border-radius:1.5px;background:linear-gradient(rgba(255,255,255,.18),rgba(255,255,255,0)),#f8e58c;box-shadow:0 .5px 1px rgba(0,0,0,.18)"></div>
<div style="left:1299px;top:412px;width:8.6px;height:8.6px;border-radius:1.5px;background:linear-gradient(rgba(255,255,255,.18),rgba(255,255,255,0)),#c9e590;box-shadow:0 .5px 1px rgba(0,0,0,.18)"></div>
<div style="left:1317px;top:412px;width:8.6px;height:8.6px;border-radius:1.5px;background:linear-gradient(rgba(255,255,255,.18),rgba(255,255,255,0)),#a3d0fb;box-shadow:0 .5px 1px rgba(0,0,0,.18)"></div>
<div style="left:1335px;top:412px;width:8.6px;height:8.6px;border-radius:1.5px;background:linear-gradient(rgba(255,255,255,.18),rgba(255,255,255,0)),#dcbcee;box-shadow:0 .5px 1px rgba(0,0,0,.18)"></div>
<div style="left:1353px;top:412px;width:8.6px;height:8.6px;border-radius:1.5px;background:linear-gradient(rgba(255,255,255,.18),rgba(255,255,255,0)),#d2d2d2;box-shadow:0 .5px 1px rgba(0,0,0,.18)"></div>
<span class="t lab" style="letter-spacing:0.104px;top:430px">Object ID</span>
<span class="t s11" style="letter-spacing:0.463px;left:1228.5px;top:430px">zZT-CE-rPQ</span>
<span class="t lab" style="letter-spacing:0.053px;top:450px">Lock</span>
<div style="left:1226.5px;top:449px;width:167.5px;height:16.3px;border-radius:4px;background:#fff;box-shadow:0 0 0 .5px rgba(0,0,0,.22),0 1px 0 rgba(0,0,0,.2)"></div>
<div style="left:1378.5px;top:448.6px;width:15.9px;height:17px;border-radius:0 4px 4px 0;background:linear-gradient(#5aa9fb,#166cf2)"></div>
<svg style="left:1382px;top:451px" width="9" height="12" viewBox="0 0 9 12"><path d="M1.6 4.6L4.5 1.6L7.4 4.6M1.6 7.4L4.5 10.4L7.4 7.4" fill="none" stroke="#fff" stroke-width="1.3"/></svg>
<span class="t" style="letter-spacing:0.187px;left:1234px;top:450px;font-size:11.5px">Inherited - (Nothing)</span>
<span class="t lab" style="letter-spacing:0.073px;top:473px">Notes</span>
<div style="left:1226.5px;top:472.3px;width:167.5px;height:15.7px;border-radius:4px;background:#fff;box-shadow:0 0 0 .5px rgba(0,0,0,.22),0 1px 0 rgba(0,0,0,.2)"></div>
<div class="vl" style="left:1247px;top:473px;height:15px;background:#e2e2e2"></div>
<div class="vl" style="left:1268px;top:473px;height:15px;background:#e2e2e2"></div>
<div class="vl" style="left:1289px;top:473px;height:15px;background:#e2e2e2"></div>
<div class="vl" style="left:1310px;top:473px;height:15px;background:#e2e2e2"></div>
<div class="vl" style="left:1330px;top:473px;height:15px;background:#e2e2e2"></div>
<div class="vl" style="left:1351px;top:473px;height:15px;background:#e2e2e2"></div>
<div class="vl" style="left:1372px;top:473px;height:15px;background:#e2e2e2"></div>
<svg style="left:1229px;top:475px" width="16" height="8" viewBox="0 0 16 8"><path d="M1 .5H15M1 2.5H11.6M1 4.5H15M1 6.5H11.6" stroke="#111" stroke-width="1"/></svg>
<svg style="left:1250px;top:475px" width="16" height="8" viewBox="0 0 16 8"><path d="M1 .5H15M2.8 2.5H13M1 4.5H15M2.8 6.5H13" stroke="#111" stroke-width="1"/></svg>
<svg style="left:1271px;top:475px" width="16" height="8" viewBox="0 0 16 8"><path d="M1 .5H15M4.4 2.5H15M1 4.5H15M4.4 6.5H15" stroke="#111" stroke-width="1"/></svg>
<svg style="left:1292px;top:475px" width="16" height="8" viewBox="0 0 16 8"><path d="M1 .5H15M1 2.5H15M1 4.5H15M1 6.5H15" stroke="#111" stroke-width="1"/></svg>
<svg style="left:1313px;top:478px" width="15" height="2" viewBox="0 0 15 2"><path d="M0 .5H3.6M5 .5H9M10.4 .5H14" stroke="#111" stroke-width="1"/></svg>
<svg style="left:1334px;top:473px" width="15" height="13" viewBox="0 0 15 13"><rect x="1.5" y=".6" width="12" height="10.8" fill="#fff" stroke="#111" stroke-width="1.1"/><path d="M1.5 11.4L13.5 .6" stroke="#f0281e" stroke-width="1"/></svg>
<svg style="left:1354px;top:473px" width="15" height="13" viewBox="0 0 15 13"><rect x="1.5" y=".6" width="12" height="10.8" fill="#fff" stroke="#111" stroke-width="1.1"/><text x="4.6" y="9.6" font-family="Liberation Serif,serif" font-size="10.5" fill="#333">a</text><path d="M1.5 11.4L13.5 .6" stroke="#f0281e" stroke-width="1"/></svg>
<svg style="left:1376px;top:473px" width="16" height="12" viewBox="0 0 16 12"><rect x="1.5" y="8" width="1.3" height="1.3" fill="#111"/><rect x="4.3" y="8" width="1.3" height="1.3" fill="#111"/><rect x="7.1" y="8" width="1.3" height="1.3" fill="#111"/><path d="M10.6 1.6H15L12.8 4.6Z" fill="#111"/></svg>
<div class="fld" style="left:1226px;top:493.5px;width:156px;height:18.5px"></div>
<span class="t" style="letter-spacing:0.223px;left:1230px;top:496px;font-size:11px;color:#b9b9b9">No Font</span>
<svg style="left:1365px;top:496px" width="14" height="14" viewBox="0 0 13 13"><circle cx="6.5" cy="6.5" r="6.3" fill="#b7b7b7"/><path d="M3 6.5H9.4M6.8 3.6L9.8 6.5L6.8 9.4" fill="none" stroke="#fff" stroke-width="1.5"/></svg>
<div style="left:1384px;top:494.2px;width:9.5px;height:16.8px;border-radius:4.5px;background:#fff;box-shadow:0 0 0 .5px rgba(0,0,0,.25),0 1px 0 rgba(0,0,0,.18)"></div>
<svg style="left:1384.7px;top:495.6px" width="8" height="14" viewBox="0 0 8 14"><path d="M1.2 5L4 2.4L6.8 5M1.2 9L4 11.6L6.8 9" fill="none" stroke="#222" stroke-width="1.2"/></svg>
<div class="fld" style="left:1226px;top:516px;width:168px;height:34px"></div>
<div class="hl" style="left:1142px;top:565px;width:258px;background:#c3c3c3"></div>
<!--LIBRARY-->
<div style="left:1142px;top:711px;width:258px;height:248px;background:#fff"></div>
<div class="hl" style="left:1142px;top:711px;width:258px;background:#b9b9b9"></div>
<div style="left:1142px;top:712px;width:258px;height:28px;background:#fefefe"></div>
<div class="hl" style="left:1142px;top:740px;width:258px;background:#c3c3c3"></div>
<svg style="left:1220px;top:719px" width="13" height="15" viewBox="0 0 13 15"><path d="M1.6 1.9 H7.6 L11.4 5.7 V13.3 H1.6Z M7.6 1.9 V5.7 H11.4" fill="none" stroke="#555" stroke-width="1.2"/></svg>
<span class="t" style="left:1250.5px;top:718.5px;font-size:13px;color:#555;letter-spacing:2.2px">{}</span>
<svg style="left:1278px;top:718px" width="17" height="17" viewBox="0 0 17 17"><circle cx="8.5" cy="8.5" r="6.55" fill="none" stroke="#1a7bf5" stroke-width="1.9"/><rect x="6.4" y="6.4" width="4.2" height="4.2" fill="none" stroke="#1a7bf5" stroke-width="1.2"/></svg>
<svg style="left:1309.4px;top:720.4px" width="14" height="12" viewBox="0 0 14 12"><rect x="1.1" y="1.1" width="11.8" height="9.8" fill="none" stroke="#555" stroke-width="1.2"/><path d="M2.6 3.2H4.4M2.6 5.2H4.4M2.6 7.2H4.4M2.6 9H4.4M9.6 3.2H11.4M9.6 5.2H11.4M9.6 7.2H11.4M9.6 9H11.4" stroke="#555" stroke-width=".9"/></svg>
<div style="left:1142px;top:741px;width:244px;height:190px;overflow:hidden">
 <svg style="left:17px;top:-8px" width="28" height="14" viewBox="0 0 28 14"><path d="M0 6.4 L11 13.6 L26 7 V0 H0Z" fill="#fcc419"/><path d="M10.6 0V13.4" stroke="#fff6d0" stroke-width="1"/><path d="M11 0 L26 0 V7 L11 13.6Z" fill="#f5b50e" opacity=".5"/></svg>
 <span class="t d" style="letter-spacing:-0.099px;left:60.5px;top:-10px">available in Interface Builder.</span>
 <div class="hl" style="left:4px;top:15px;width:236px;background:#d6d6d6"></div>
 <span id="biglabel" class="t" style="letter-spacing:-0.328px;left:6.6px;top:35px;font-size:20px;line-height:26px;color:#111">Label</span>
 <span class="t d" style="letter-spacing:0.032px;left:60.5px;top:33px"><b>Label</b> - A variably sized amount of</span>
 <span class="t d" style="letter-spacing:0.039px;left:60.5px;top:46px">static text.</span>
 <div style="left:0;top:78px;width:244px;height:64px;background:#ebebeb;border-top:1px solid #dadada;border-bottom:1px solid #dadada"></div>
 <span class="t" style="letter-spacing:-0.203px;left:7px;top:99px;font-size:16.5px;line-height:22px;color:#1f8af8">Button</span>
 <span class="t d" style="letter-spacing:0.083px;left:60.5px;top:90px"><b>Button</b> - Intercepts touch events</span>
 <span class="t d" style="letter-spacing:-0.155px;left:60.5px;top:103px">and sends an action message to a</span>
 <span class="t d" style="letter-spacing:0.025px;left:60.5px;top:116px">target object when it's tapped.</span>
 <div style="left:7px;top:158px;width:48px;height:30px;border:1px solid #1a7bf5;border-radius:4px;background:#fff;overflow:hidden"><div style="left:0;top:0;width:23px;height:30px;background:#1a7bf5"></div></div>
 <span class="t b" style="left:14px;top:163px;font-size:17px;line-height:20px;color:#fff">1</span>
 <span class="t" style="left:38px;top:163px;font-size:17px;line-height:20px;color:#1a7bf5">2</span>
 <span class="t d" style="letter-spacing:0.204px;left:60.5px;top:153px"><b>Segmented Control</b> - Displays</span>
 <span class="t d" style="letter-spacing:-0.079px;left:60.5px;top:166px">multiple segments, each of which</span>
 <span class="t d" style="letter-spacing:-0.005px;left:60.5px;top:179px">functions as a discrete button.</span>
</div>
<div style="left:1386px;top:741px;width:14px;height:190px;background:#fafafa;border-left:1px solid #e8e8e8"></div>
<div style="left:1390.5px;top:776.5px;width:7px;height:17px;border-radius:3.5px;background:#c1c1c1"></div>
<!--BOTTOM-->
<div class="hl" style="left:1142px;top:931px;width:258px;background:#c3c3c3"></div>
<div style="left:1142px;top:932px;width:258px;height:27px;background:#fafafa"></div>
<svg style="left:1150px;top:940px" width="14" height="14" viewBox="0 0 14 14"><path d="M.8 .8H5.6V5.6H.8Z M8.4 .8H13.2V5.6H8.4Z M.8 8.4H5.6V13.2H.8Z M8.4 8.4H13.2V13.2H8.4Z" fill="none" stroke="#5f5f5f" stroke-width="1"/></svg>
<div style="left:1170px;top:935px;width:226px;height:21.5px;border:1px solid #bcbcbc;border-radius:4px;background:#fff"></div>
<svg style="left:1175px;top:940px" width="13" height="13" viewBox="0 0 13 13"><circle cx="6.5" cy="6.5" r="5.8" fill="none" stroke="#7a7a7a" stroke-width="1"/><path d="M2.5 7.7 Q2.5 3.2 6.5 3.2 Q10.5 3.2 10.5 7.7Z" fill="#7a7a7a"/></svg>
<span class="t" style="letter-spacing:-0.079px;left:1192px;top:939px;font-size:12px;color:#aaa">Filter</span>
<div class="hl" style="left:486px;top:933px;width:655px;background:#e4e4e4"></div>
<div style="left:486px;top:934px;width:655px;height:25px;background:#fdfdfd"></div>
<svg style="left:494px;top:941px" width="15" height="12" viewBox="0 0 15 12"><rect x=".65" y=".65" width="12.7" height="10.7" fill="none" stroke="#0a0a0a" stroke-width="1.3"/><rect x="2.1" y="2.1" width="2.1" height="7.8" rx=".5" fill="#0a0a0a"/></svg>
<span class="t" style="left:743px;top:942px;font-size:10px;color:#8a8a8a">w</span>
<span class="t" style="letter-spacing:-0.135px;left:753.5px;top:941px;font-size:13px;color:#222">Any</span>
<span class="t" style="left:782px;top:942px;font-size:10px;color:#8a8a8a">h</span>
<span class="t" style="letter-spacing:-0.135px;left:790px;top:941px;font-size:13px;color:#222">Any</span>
<svg style="left:1041px;top:941px" width="16" height="12" viewBox="0 0 16 12"><rect x=".6" y=".8" width="14.6" height="10.4" fill="none" stroke="#9a9a9a" stroke-width=".9"/><path d="M7.9 .8V11.2M.6 4.2H5M.6 7.6H5M10.6 4.2H15.2M10.6 7.6H15.2M7.9 3V9M5.8 7L7.9 9.2L10 7" fill="none" stroke="#9a9a9a" stroke-width=".9"/></svg>
<svg style="left:1067px;top:941px" width="16" height="12" viewBox="0 0 16 12"><path d="M.9 .4V11.6" stroke="#2a2a2a" stroke-width="1.2"/><rect x="3.6" y="1.2" width="7.6" height="3.6" fill="none" stroke="#2a2a2a" stroke-width="1.1"/><rect x="3.6" y="7.2" width="11.2" height="3.6" fill="none" stroke="#2a2a2a" stroke-width="1.1"/></svg>
<svg style="left:1093px;top:941px" width="16" height="12" viewBox="0 0 16 12"><path d="M.7 .4V11.6M15.1 .4V11.6M.7 6H4.4M11.4 6H15.1" stroke="#2a2a2a" stroke-width="1.1"/><rect x="4.4" y="3" width="7" height="6" fill="none" stroke="#2a2a2a" stroke-width="1.1"/></svg>
<svg style="left:1118.5px;top:941px" width="17" height="12" viewBox="0 0 17 12"><path d="M.7 .4V11.6M16.1 .4V11.6M.7 6H3.6M12.6 6H16.1" stroke="#2a2a2a" stroke-width="1.1"/><path d="M8.1 2.2L11.8 9.4H4.4Z" fill="none" stroke="#2a2a2a" stroke-width="1.1"/></svg>
<div style="left:220.5px;top:934.5px;width:259.5px;height:22.5px;border:1px solid #b6b6b6;border-radius:4px;background:#fff"></div>
<svg style="left:226px;top:940px" width="13" height="13" viewBox="0 0 13 13"><circle cx="6.5" cy="6.5" r="5.8" fill="none" stroke="#7a7a7a" stroke-width="1"/><path d="M2.5 7.7 Q2.5 3.2 6.5 3.2 Q10.5 3.2 10.5 7.7Z" fill="#7a7a7a"/></svg>
<span class="t" style="letter-spacing:-0.079px;left:243px;top:939px;font-size:12px;color:#9c9c9c">Filter</span>
<svg style="left:10px;top:941px" width="11" height="11" viewBox="0 0 11 11"><path d="M5.5 .2V10.8M.2 5.5H10.8" stroke="#5a5a5a" stroke-width="1"/></svg>
<div style="left:29px;top:935.5px;width:181px;height:21px;border:1px solid #b3b8c1;border-radius:4px"></div>
<svg style="left:33.5px;top:940px" width="13" height="13" viewBox="0 0 13 13"><circle cx="6.5" cy="6.5" r="5.8" fill="none" stroke="#7a7f88" stroke-width="1"/><path d="M2.5 7.7 Q2.5 3.2 6.5 3.2 Q10.5 3.2 10.5 7.7Z" fill="#7a7f88"/></svg>
<span class="t" style="letter-spacing:-0.079px;left:51px;top:939px;font-size:12px;color:#b9c0cd">Filter</span>
<svg style="left:174px;top:940px" width="13" height="13" viewBox="0 0 13 13"><circle cx="6.5" cy="6.5" r="5.8" fill="none" stroke="#6a6a6a" stroke-width="1"/><path d="M6.5 3V6.5L8.8 8.6" fill="none" stroke="#6a6a6a" stroke-width="1"/></svg>
<svg style="left:191px;top:940px" width="14" height="13" viewBox="0 0 14 13"><rect x=".6" y=".6" width="12.4" height="11.6" fill="none" stroke="#6a6a6a" stroke-width="1"/><path d="M.6 .6L13 12.2M13 .6L.6 12.2" stroke="#6a6a6a" stroke-width=".9"/><circle cx="6.8" cy="6.4" r="2.5" fill="#dbe5f4" stroke="#6a6a6a" stroke-width=".9"/></svg>
</div>
</body></html>
